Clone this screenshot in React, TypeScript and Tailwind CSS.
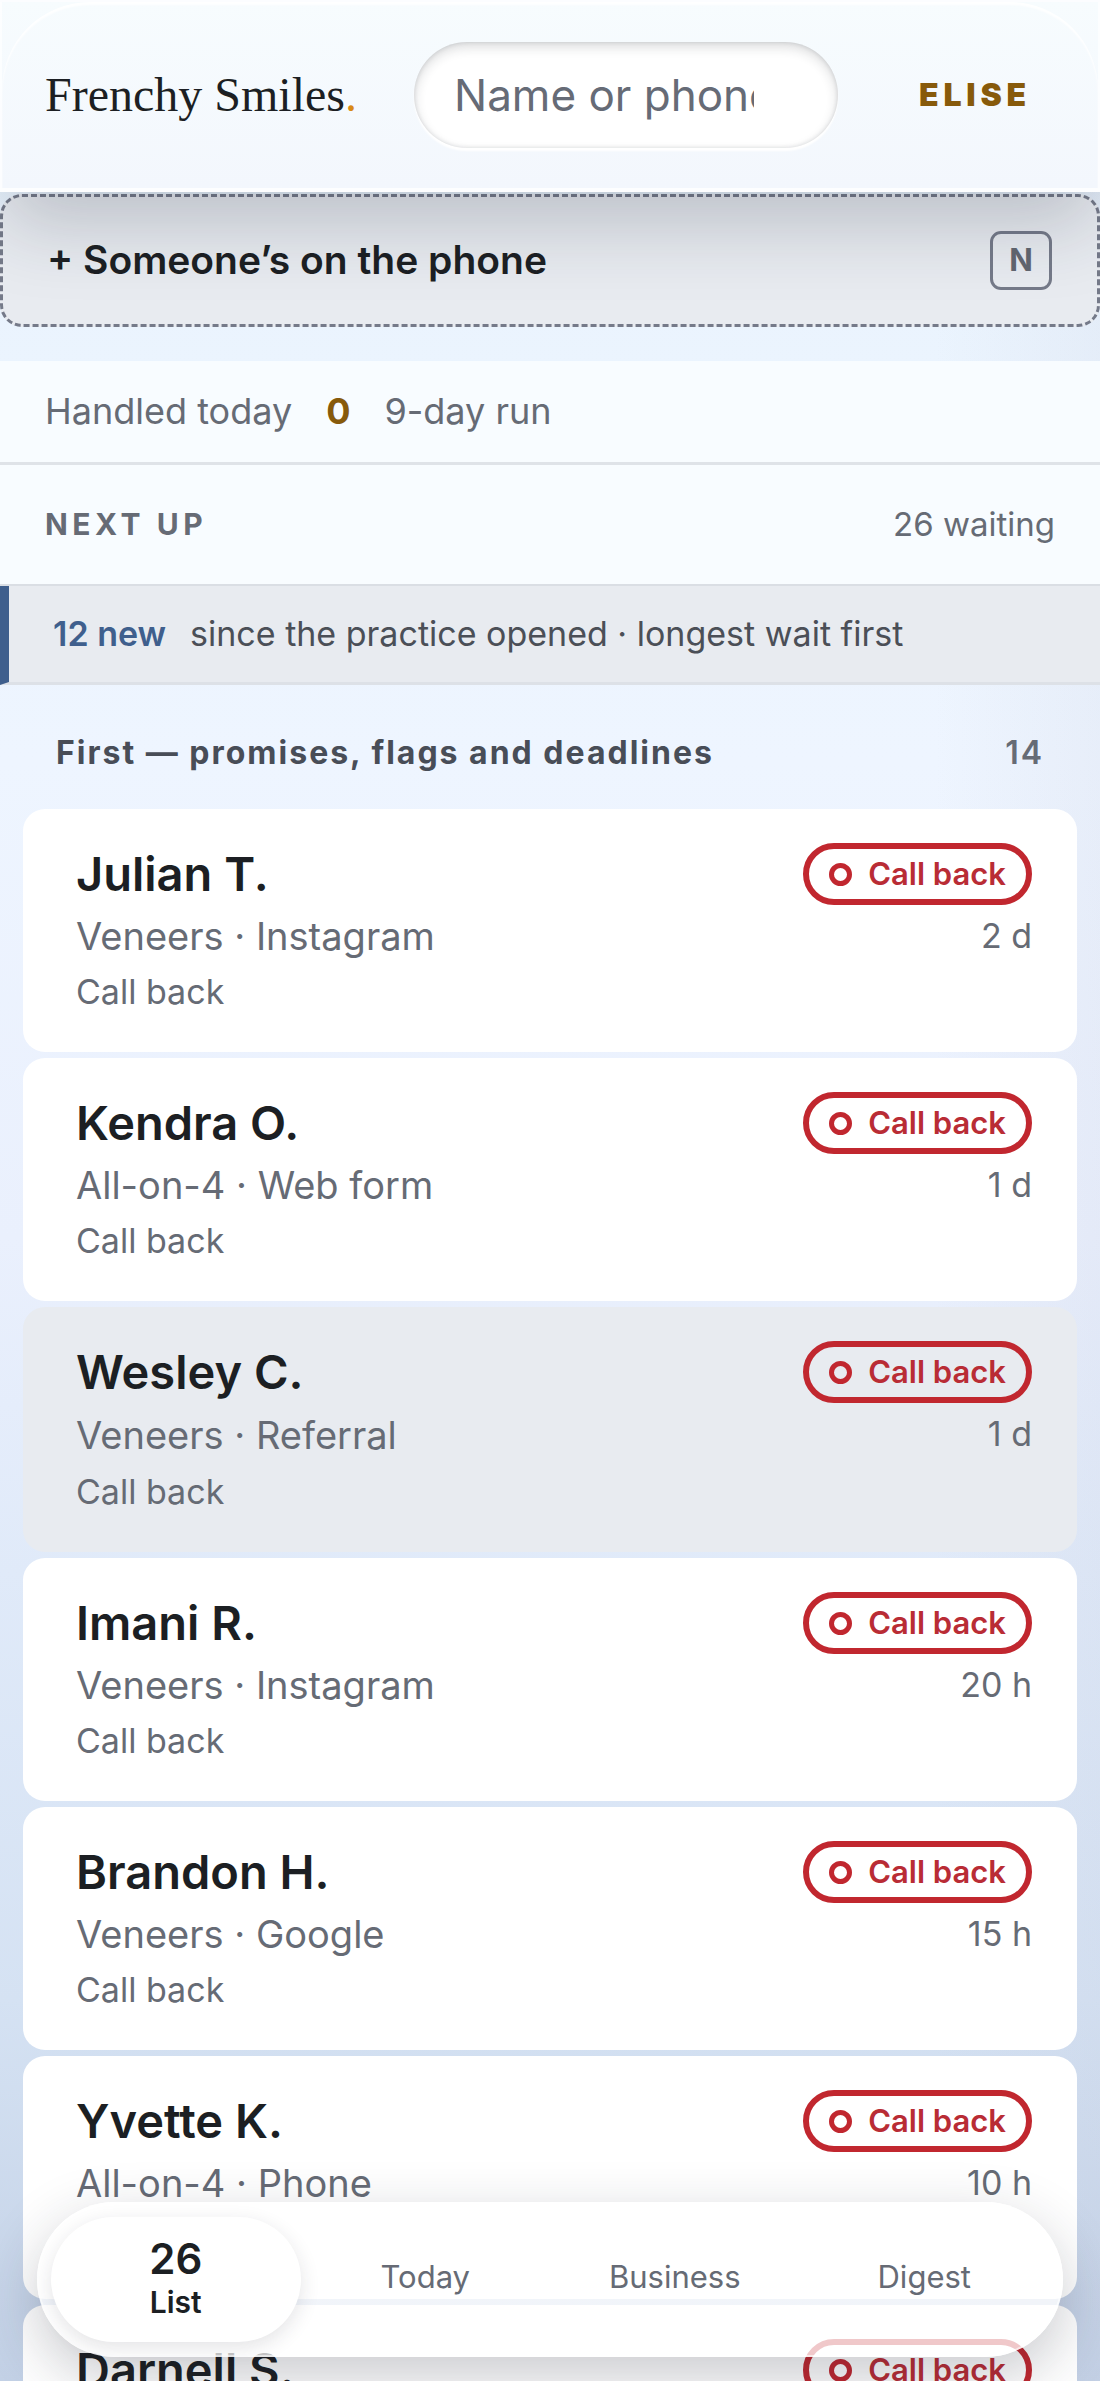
type Lead = {
  name: string
  treatment: string
  source: string
  wait: string
  selected?: boolean
}

const leads: Lead[] = [
  { name: 'Julian T.', treatment: 'Veneers', source: 'Instagram', wait: '2 d' },
  { name: 'Kendra O.', treatment: 'All-on-4', source: 'Web form', wait: '1 d' },
  { name: 'Wesley C.', treatment: 'Veneers', source: 'Referral', wait: '1 d', selected: true },
  { name: 'Imani R.', treatment: 'Veneers', source: 'Instagram', wait: '20 h' },
  { name: 'Brandon H.', treatment: 'Veneers', source: 'Google', wait: '15 h' },
  { name: 'Yvette K.', treatment: 'All-on-4', source: 'Phone', wait: '10 h' },
  { name: 'Darnell S.', treatment: 'Veneers', source: 'Web form', wait: '8 h' },
]

const tabs = ['Today', 'Business', 'Digest']

function Header() {
  return (
    <header className="relative z-10 flex h-48 shrink-0 items-center gap-[57px] border-2 border-b-4 border-white/70 bg-linear-to-b from-[#f7fcfe] to-[#f3f7fd] px-[43px] shadow-[0_36px_76px_-4px_rgba(30,41,59,0.22)]">
      <div className="pointer-events-none absolute inset-0 rounded-t-[88px] shadow-[inset_0_3px_2px_rgba(255,255,255,0.9)]" />
      <a href="#" className="relative whitespace-nowrap font-['Liberation_Serif',serif] text-[48px] leading-none text-[#1c1f23]">
        Frenchy Smiles<span className="text-[#d98a16]">.</span>
      </a>
      <input
        type="text"
        aria-label="Search by name or phone"
        placeholder="Name or phone"
        className="relative h-[106px] min-w-0 flex-1 rounded-full bg-white pr-[84px] pl-10 text-[44px] text-[#1c1f23] shadow-[inset_0_5px_12px_rgba(30,35,45,0.16),inset_0_0_4px_rgba(30,35,45,0.15),0_3px_2px_#ffffff] outline-none placeholder:text-[#666b76] placeholder:opacity-100"
      />
      <button type="button" className="relative px-6 text-[32px] font-black tracking-[0.15em] text-[#875a0b]">
        ELISE
      </button>
    </header>
  )
}

function StatusPill() {
  return (
    <span className="flex h-[62px] items-center gap-4 rounded-full border-[6px] border-[#c1272f] px-5 text-[31px] font-semibold text-[#b92c35]">
      <span className="size-[23px] rounded-full border-[5px] border-[#c1272f]" />
      Call back
    </span>
  )
}

function LeadCard({ lead }: { lead: Lead }) {
  return (
    <li>
      <button
        type="button"
        className={`flex w-full items-start justify-between rounded-[22px] pt-[34px] pr-[45px] pb-[35px] pl-[53px] text-left ${
          lead.selected ? 'bg-[#e8ebf0]' : 'bg-white'
        }`}
      >
        <span className={`flex flex-col ${lead.selected ? 'gap-px' : ''}`}>
          <span className="text-[47px] leading-[62px] font-semibold text-[#1c1f23]">{lead.name}</span>
          <span className="text-[38px] leading-[62px] text-[#666b75]">
            {lead.treatment} · {lead.source}
          </span>
          <span className="text-[34px] leading-[50px] text-[#666b75]">Call back</span>
        </span>
        <span className="flex flex-col items-end">
          <StatusPill />
          <span className="text-[34px] leading-[62px] text-[#666b75]">{lead.wait}</span>
        </span>
      </button>
    </li>
  )
}

function TabBar() {
  return (
    <nav className="absolute inset-x-[37px] bottom-6 z-20 grid grid-cols-4 rounded-full border-2 border-white/60 bg-white/75 px-3 py-[13px] shadow-[0_20px_60px_rgba(30,35,50,0.24)]">
      <a
        href="#list"
        aria-current="page"
        className="flex h-[125px] flex-col items-center justify-center rounded-full bg-white pb-0.5 text-[#1c1f23] shadow-[0_6px_20px_rgba(30,35,50,0.12)]"
      >
        <span className="text-[42px] leading-[46px] font-semibold">26</span>
        <span className="text-[30px] leading-10 font-semibold">List</span>
      </a>
      {tabs.map((tab) => (
        <a key={tab} href={`#${tab.toLowerCase()}`} className="flex items-center justify-center pb-1 text-[31px] text-[#666b75]">
          {tab}
        </a>
      ))}
    </nav>
  )
}

export default function App() {
  return (
    <div className="relative flex h-screen flex-col overflow-hidden bg-[linear-gradient(to_right,transparent_85%,rgba(190,195,215,0.14)),linear-gradient(to_bottom,#e8f3fd,#eef5ff_32%,#eaf0fd_52%,#e0eaf9_66%,#d5e2f3_84%,#c3d1e6)] font-['Inter',sans-serif]">
      <Header />

      <button
        type="button"
        className="mt-[2px] flex h-[133px] shrink-0 items-center justify-between rounded-[22px] border-3 border-dashed border-[#757a89] bg-[#e8ebf0] pr-[45px] pl-11"
      >
        <span className="text-[39px] font-semibold text-[#1c1f23]">+ Someone’s on the phone</span>
        <kbd className="flex h-[59px] w-[62px] items-center justify-center rounded-[11px] border-3 border-[#757a89] font-['Inter',sans-serif] text-[31px] font-bold text-[#62666f]">
          N
        </kbd>
      </button>

      <section className="relative z-10 mt-[34px] shrink-0 bg-[#f8fcff]">
        <div className="flex h-[104px] items-center gap-[34px] border-b-3 border-[#dfe3e8] px-[45px] pb-0.5 text-[36px] text-[#666b75]">
          <span>Handled today</span>
          <strong className="font-bold text-[#875a0b]">0</strong>
          <span>9-day run</span>
        </div>
        <div className="flex h-[121px] items-center justify-between border-b-2 border-[#dadee4] px-[45px]">
          <h1 className="text-[30px] font-bold tracking-[0.15em] text-[#666b75]">NEXT UP</h1>
          <span className="text-[33px] text-[#666b75]">26 waiting</span>
        </div>
      </section>

      <div className="flex h-[99px] shrink-0 items-center gap-6 border-b-3 border-l-9 border-b-[#dde1e7] border-l-[#3f5f8d] bg-[#e8ebf0] pb-0.5 pl-11 text-[34px] text-[#4b4f57]">
        <strong className="font-semibold text-[#3f5f8d]">12 new</strong>
        <span>since the practice opened · longest wait first</span>
      </div>

      <main className="min-h-0 flex-1 overflow-hidden">
        <div className="flex h-[124px] items-center justify-between px-14 pt-3 text-[32px] font-bold tracking-[2px]">
          <h2 className="text-[#484d57]">First — promises, flags and deadlines</h2>
          <span className="font-semibold text-[#666b75]">14</span>
        </div>
        <ul className="flex flex-col gap-1.5 px-[23px]">
          {leads.map((lead) => (
            <LeadCard key={lead.name} lead={lead} />
          ))}
        </ul>
      </main>

      <TabBar />
    </div>
  )
}
